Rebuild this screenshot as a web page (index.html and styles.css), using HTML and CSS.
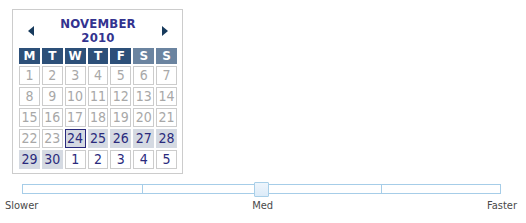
FILE: index.html
```html
<!DOCTYPE html>
<html>

<head>
	<meta charset="UTF-8">
	<title>Date and speed</title>
	<link rel="stylesheet" href="styles.css">
</head>

<body>
	<div class="cal">
		<div class="cal-head">
			<span class="arrow prev"></span>
			<div class="cal-title">NOVEMBER<br>2010</div>
			<span class="arrow next"></span>
		</div>
		<div class="cal-grid" id="calGrid">
			<div class="dow">M</div>
			<div class="dow">T</div>
			<div class="dow">W</div>
			<div class="dow">T</div>
			<div class="dow">F</div>
			<div class="dow weekend">S</div>
			<div class="dow weekend">S</div>
		</div>
	</div>

	<div class="speed">
		<div class="track">
			<div class="seg"></div>
			<div class="seg"></div>
			<div class="seg"></div>
			<div class="seg"></div>
			<div class="handle"></div>
		</div>
		<div class="labels">
			<span>Slower</span>
			<span>Med</span>
			<span>Faster</span>
		</div>
	</div>

	<script type="text/javascript">
		const calGrid = document.getElementById('calGrid')
		for (let i = 1; i <= 35; i++) {
			const day = document.createElement('div')
			day.classList.add('day')
			let num = i
			if (i > 30) {
				num = i - 30
				day.classList.add('next-month')
			} else if (i < 24) {
				day.classList.add('past')
			} else {
				day.classList.add('range')
				if (i === 24) day.classList.add('today')
			}
			day.innerHTML = num
			calGrid.appendChild(day)
		}
	</script>
</body>

</html>
```

FILE: styles.css
```css
body {
	margin: 0;
	font-family: "DejaVu Sans", Verdana, sans-serif;
}
.cal {
	box-sizing: border-box;
	width: 171px;
	height: 165px;
	margin: 9px 0 0 12px;
	padding: 7px 5px 0 6px;
	border: 1px solid #cccccc;
	background: #ffffff;
}
.cal-head {
	display: flex;
	align-items: center;
	justify-content: space-between;
	padding: 0 9px;
	height: 28px;
	margin-bottom: 3px;
}
.cal-title {
	font-size: 13px;
	font-weight: bold;
	font-stretch: condensed;
	line-height: 14px;
	text-align: center;
	color: #33338f;
	letter-spacing: 0.2px;
}
.arrow {
	width: 0;
	height: 0;
	border-top: 5.5px solid transparent;
	border-bottom: 5.5px solid transparent;
}
.prev {
	border-right: 6px solid #173a5c;
}
.next {
	border-left: 6px solid #173a5c;
}
.cal-grid {
	display: grid;
	grid-template-columns: repeat(7, 1fr);
	grid-template-rows: 16px;
	grid-auto-rows: 19px;
	gap: 2px;
}
.dow {
	background: #2d5079;
	color: #ffffff;
	font-size: 12px;
	font-weight: bold;
	line-height: 16px;
	text-align: center;
}
.dow.weekend {
	background: #6b84a0;
}
.day {
	box-sizing: border-box;
	border: 1px solid #cccccc;
	font-size: 14px;
	font-stretch: condensed;
	line-height: 17px;
	text-align: center;
	color: #a8a8a8;
	background: #ffffff;
}
.day.range {
	background: #d5dae2;
	border-color: #d5dae2;
	color: #2a2a7c;
}
.day.today {
	border-color: #2a2a7c;
}
.day.next-month {
	color: #2a2a7c;
}
.speed {
	width: 512px;
	margin: 10px 0 0 5px;
}
.track {
	position: relative;
	display: flex;
	height: 10px;
	margin: 0 16px 0 17px;
	border: 1px solid #a6cde8;
	box-sizing: border-box;
}
.seg {
	flex: 1;
}
.seg + .seg {
	border-left: 1px solid #a6cde8;
}
.handle {
	position: absolute;
	left: 50%;
	top: -3px;
	width: 15px;
	height: 15px;
	margin-left: -8px;
	box-sizing: border-box;
	border: 1px solid #a8cfe8;
	border-radius: 1px;
	background: linear-gradient(#eef5fc, #dcebf8);
}
.labels {
	display: flex;
	justify-content: space-between;
	margin-top: 5px;
	font-size: 11px;
	font-stretch: condensed;
	color: #4a4a4a;
}
```
